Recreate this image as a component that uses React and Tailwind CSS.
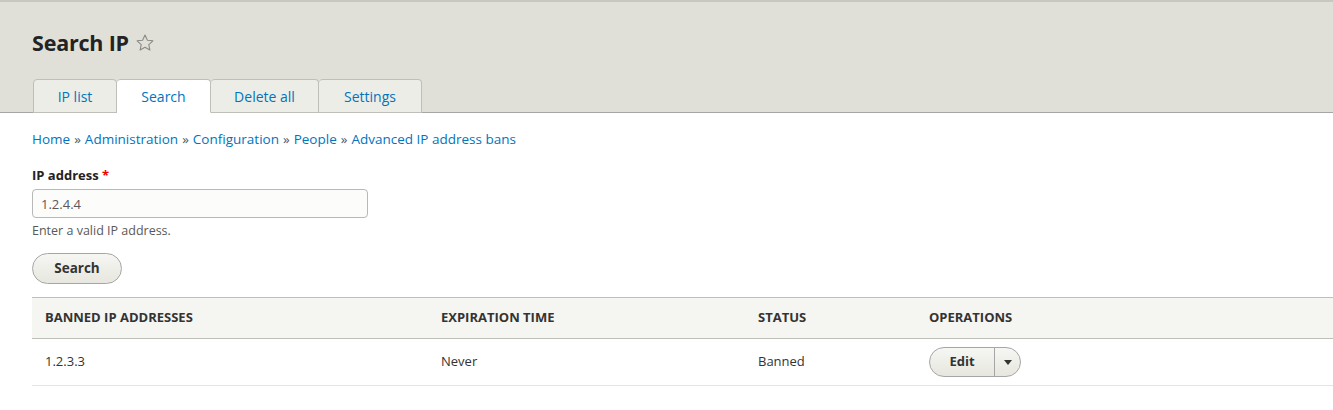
import React from 'react';

const tabs = [
  { label: 'IP list', w: 'w-[84px]' },
  { label: 'Search', w: 'w-[94px]' },
  { label: 'Delete all', w: 'w-[108px]' },
  { label: 'Settings', w: 'w-[103px]' },
];
const crumbs = ['Home', 'Administration', 'Configuration', 'People', 'Advanced IP address bans'];

const Star = () => (
  <svg width="20" height="20" viewBox="0 0 24 24" fill="none" stroke="#8a8a84" strokeWidth="1.3" strokeLinejoin="round">
    <path d="M12 2.5l2.9 6.2 6.6.7-5 4.5 1.4 6.6L12 17.2l-5.9 3.3 1.4-6.6-5-4.5 6.6-.7z" />
  </svg>
);

export default function App() {
  return (
    <div className="min-h-[410px] bg-white text-[#333] font-['Open_Sans',sans-serif] text-[13px]">
      {/* Header with title and tabs */}
      <header className="bg-[#e0e0d8] border-t-2 border-[#c8c8c2] border-b border-b-[#a6a6a6]">
        <div className="px-8 pt-[25px]">
          <h1 className="flex items-center gap-[6px] text-[21.5px] font-bold text-[#232323] leading-[32px] tracking-[-0.2px]">
            Search IP
            <Star />
          </h1>
          <ul className="flex mt-[20px] pl-px">
            {tabs.map((t) => (
              <li
                key={t.label}
                className={
                  'h-[34px] -mb-px flex items-center justify-center border border-[#bfbfba] border-l-0 first:border-l rounded-t-[4px] text-[14px] text-[#0074bd] ' +
                  t.w +
                  (t.label === 'Search' ? ' bg-white border-b-white' : ' bg-[#ededE7]')
                }
              >
                <a href="#" className="pt-px">{t.label}</a>
              </li>
            ))}
          </ul>
        </div>
      </header>

      <main className="px-8">
        {/* Breadcrumb */}
        <nav className="pt-[16px] flex gap-1 text-[13.5px] text-[#0074bd]">
          {crumbs.map((c, i) => (
            <span key={c} className="flex gap-1">
              {i > 0 && <span className="text-[#555]">»</span>}
              <a href="#">{c}</a>
            </span>
          ))}
        </nav>

        {/* Form */}
        <form className="mt-[17px] flex flex-col items-start">
          <label className="font-bold text-[#222] leading-[18px]">
            IP address <span className="text-[#e00]">*</span>
          </label>
          <input
            defaultValue="1.2.4.4"
            className="mt-[5px] w-[336px] h-[29px] px-2 border border-[#b8b8b8] rounded-sm bg-[#fcfcfa] text-[#595959] outline-none"
          />
          <div className="mt-[4px] text-[12.5px] text-[#595959]">Enter a valid IP address.</div>
          <button
            type="button"
            className="mt-[12px] w-[90px] h-[31px] rounded-full border border-[#a6a6a6] bg-gradient-to-b from-[#f6f6f3] to-[#e7e7df] text-[13.5px] font-bold text-[#333]"
          >
            Search
          </button>
        </form>

        {/* Table */}
        <table className="mt-[13px] w-[calc(100%+32px)] border-collapse text-left">
          <thead>
            <tr className="bg-[#f5f5f2] border-t border-b border-[#bfbfba] h-[41px]">
              <th className="pl-[13px] w-[409px] text-[13px] font-bold uppercase text-[#333]">Banned IP addresses</th>
              <th className="w-[317px] text-[13px] font-bold uppercase text-[#333]">Expiration time</th>
              <th className="w-[171px] text-[13px] font-bold uppercase text-[#333]">Status</th>
              <th className="text-[13px] font-bold uppercase text-[#333]">Operations</th>
            </tr>
          </thead>
          <tbody>
            <tr className="border-b border-[#e6e4df] h-[47px]">
              <td className="pl-[13px] text-[#333]">1.2.3.3</td>
              <td className="text-[#333]">Never</td>
              <td className="text-[#333]">Banned</td>
              <td>
                <div className="inline-flex h-[30px] rounded-full border border-[#a6a6a6] bg-gradient-to-b from-[#f6f6f3] to-[#e7e7df] overflow-hidden">
                  <a href="#" className="w-[64px] flex items-center justify-center font-bold text-[#333]">Edit</a>
                  <span className="w-[26px] flex items-center justify-center border-l border-[#a6a6a6]">
                    <svg width="8" height="5" viewBox="0 0 8 5"><path d="M0 0h8L4 5z" fill="#333" /></svg>
                  </span>
                </div>
              </td>
            </tr>
          </tbody>
        </table>
      </main>
    </div>
  );
}
